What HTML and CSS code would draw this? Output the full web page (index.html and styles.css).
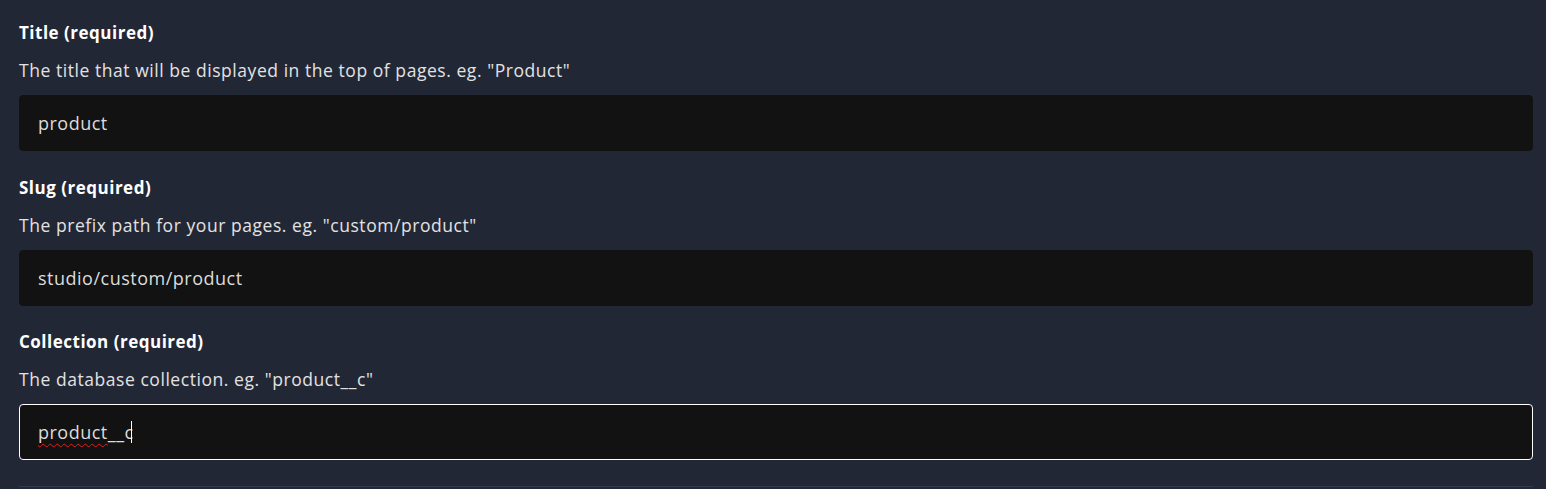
FILE: index.html
```html
<!DOCTYPE html>
<html>
<head>
<meta charset="utf-8">
<link rel="stylesheet" href="styles.css">
</head>
<body>
<form class="form">
  <div class="field">
    <div class="label">Title (required)</div>
    <div class="desc">The title that will be displayed in the top of pages. eg. "Product"</div>
    <div class="input">product</div>
  </div>
  <div class="field">
    <div class="label">Slug (required)</div>
    <div class="desc">The prefix path for your pages. eg. "custom/product"</div>
    <div class="input">studio/custom/product</div>
  </div>
  <div class="field">
    <div class="label">Collection (required)</div>
    <div class="desc">The database collection. eg. "product__c"</div>
    <div class="input focused"><span class="misspelled">product</span>__c<span class="caret"></span></div>
  </div>
  <div class="divider"></div>
</form>
</body>
</html>
```
FILE: styles.css
```css
html, body {
  margin: 0;
  padding: 0;
  background: #222736;
  height: 100%;
}
body {
  font-family: "Open Sans", "Noto Sans", sans-serif;
  color: #e4e4e4;
}
.form {
  display: flex;
  flex-direction: column;
  gap: 24.5px;
  padding: 21px 13px 0 19px;
}
.field {
  display: flex;
  flex-direction: column;
  gap: 13px;
}
.label {
  font-size: 17px;
  font-weight: 700;
  line-height: 24px;
  letter-spacing: 0.5px;
  color: #ffffff;
}
.desc {
  font-size: 17.5px;
  line-height: 24px;
  letter-spacing: 0.55px;
  color: #e2e2e2;
}
.input {
  height: 56px;
  box-sizing: border-box;
  background: #121212;
  border-radius: 4px;
  border: 1px solid #121212;
  padding: 0 18px;
  display: flex;
  align-items: center;
  font-size: 18px;
  letter-spacing: 0.5px;
  color: #dcdcdc;
}
.input.focused {
  border-color: #ffffff;
}
.misspelled {
  text-decoration: underline wavy #e0201c;
  text-decoration-thickness: 1px;
  text-underline-offset: 4px;
}
.caret {
  display: inline-block;
  width: 1px;
  height: 22px;
  background: #ffffff;
  margin-left: -3px;
}
.divider {
  margin-top: 1.5px;
  height: 1px;
  background: #363a50;
}
```
